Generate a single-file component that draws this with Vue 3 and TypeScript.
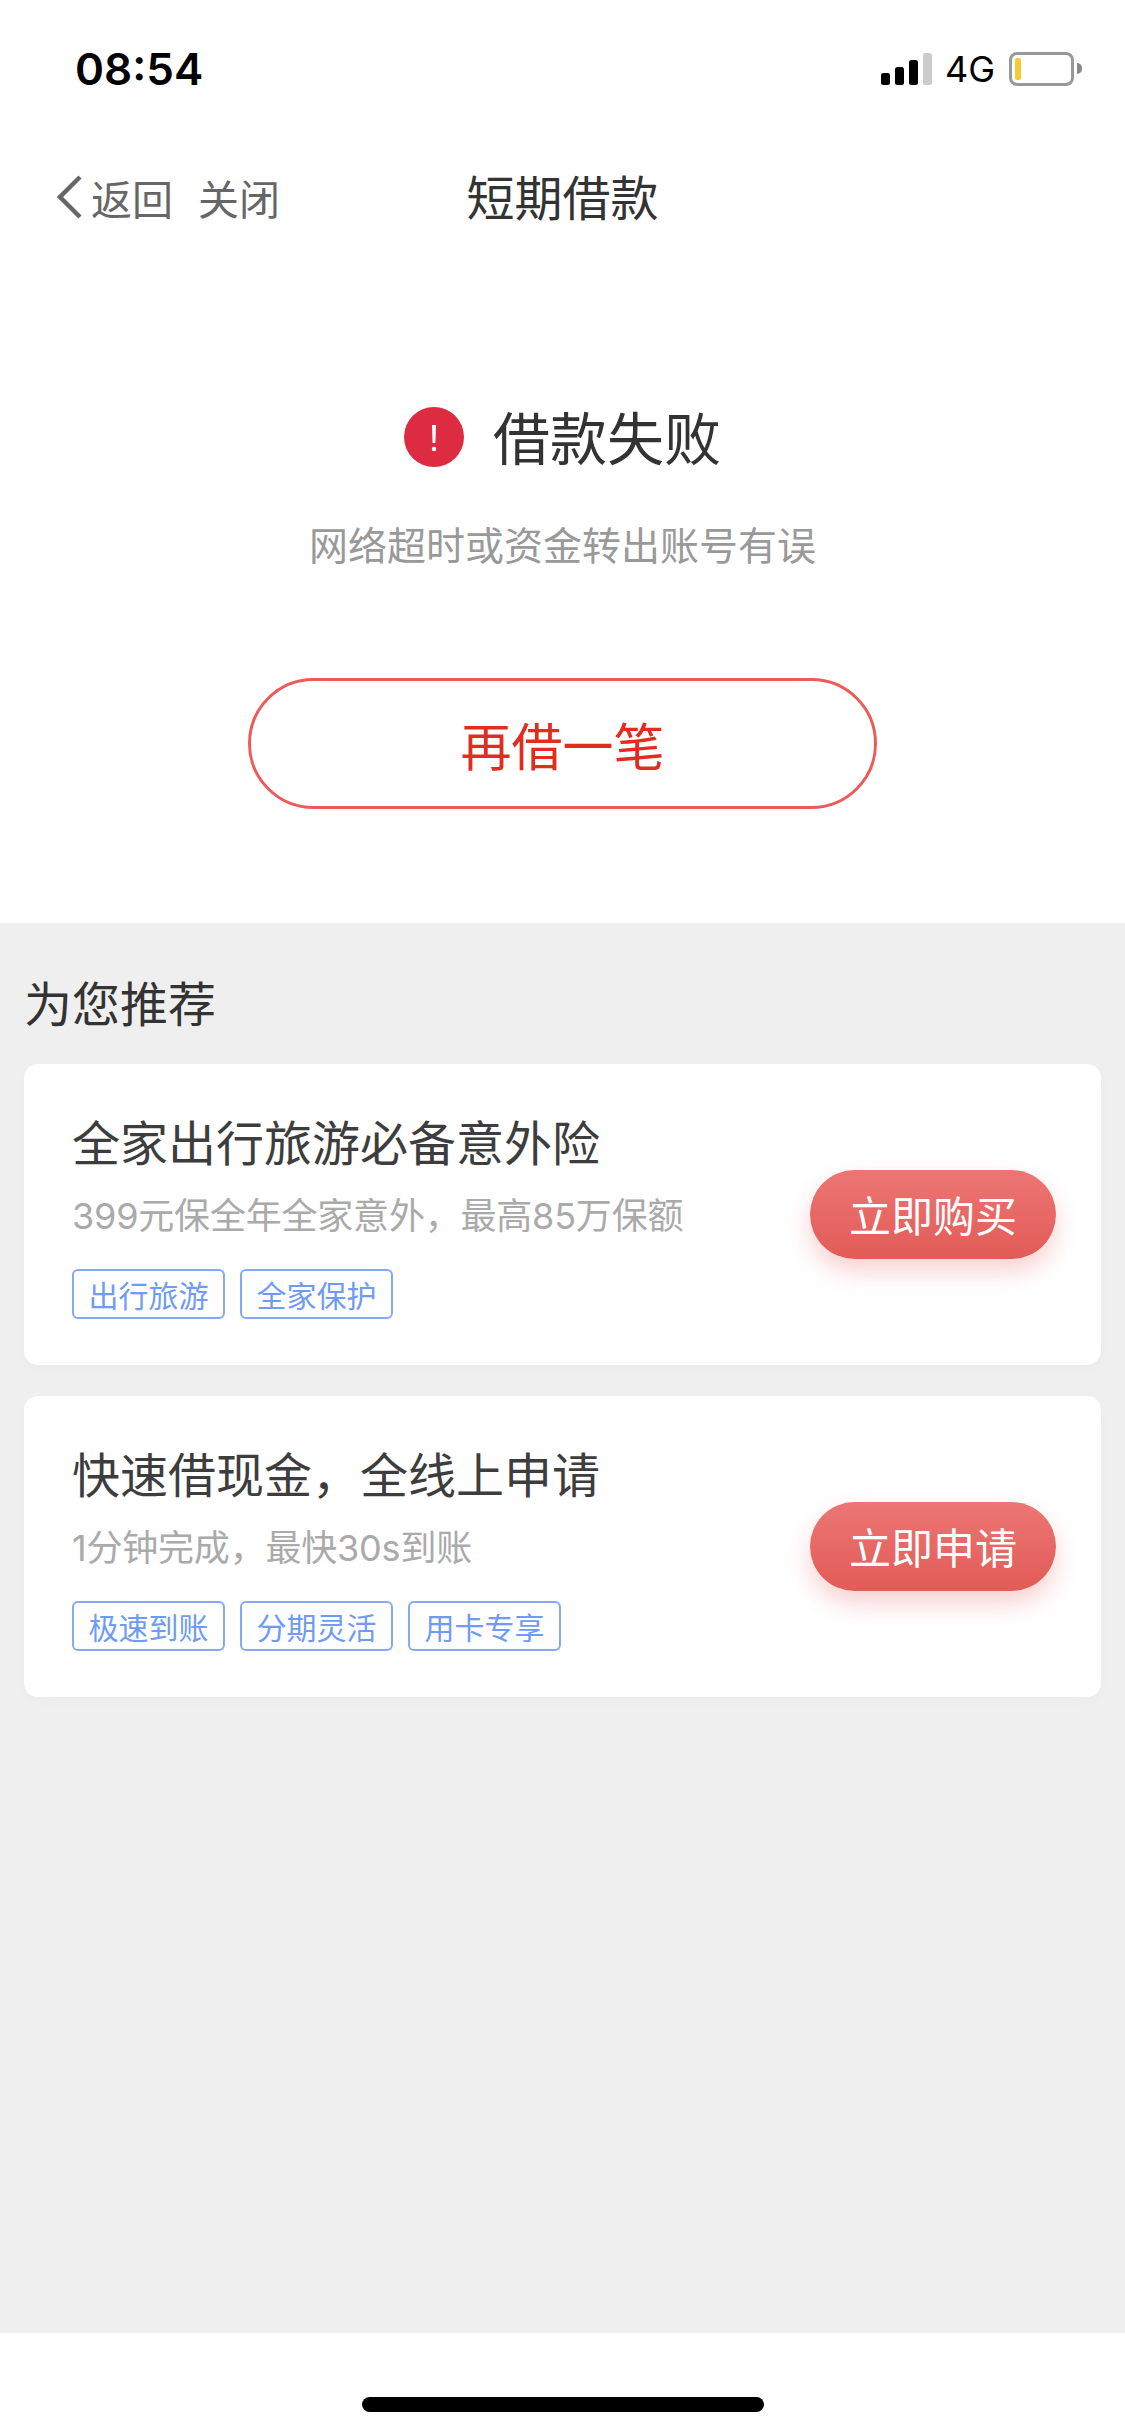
<script setup lang="ts">
interface Offer {
  title: string
  desc: string
  tags: string[]
  action: string
}

const offers: Offer[] = [
  {
    title: '全家出行旅游必备意外险',
    desc: '399元保全年全家意外，最高85万保额',
    tags: ['出行旅游', '全家保护'],
    action: '立即购买',
  },
  {
    title: '快速借现金，全线上申请',
    desc: '1分钟完成，最快30s到账',
    tags: ['极速到账', '分期灵活', '用卡专享'],
    action: '立即申请',
  },
]

const signalBars = [12, 18, 25, 32]
</script>

<template>
  <div class="page">
    <header class="status">
      <span class="time">08:54</span>
      <div class="status-right">
        <div class="signal">
          <i
            v-for="(h, i) in signalBars"
            :key="i"
            class="bar"
            :class="{ off: i === 3 }"
            :style="{ height: h + 'px' }"
          ></i>
        </div>
        <span class="net">4G</span>
        <div class="battery">
          <div class="battery-body"><i class="battery-level"></i></div>
          <i class="battery-cap"></i>
        </div>
      </div>
    </header>

    <nav class="nav">
      <div class="nav-left">
        <svg class="chevron" width="26" height="44" viewBox="0 0 26 44">
          <path d="M24 2 L4 22 L24 42" fill="none" stroke="#666" stroke-width="4.5" />
        </svg>
        <span class="nav-link back">返回</span>
        <span class="nav-link">关闭</span>
      </div>
      <h1 class="nav-title">短期借款</h1>
      <div></div>
    </nav>

    <section class="hero">
      <div class="result">
        <svg width="60" height="60" viewBox="0 0 60 60">
          <circle cx="30" cy="30" r="30" fill="#dd2c41" />
          <path d="M28 18h4l-.6 18h-2.8z" fill="#fff" />
          <circle cx="30" cy="42" r="2.2" fill="#fff" />
        </svg>
        <span class="result-text">借款失败</span>
      </div>
      <p class="reason">网络超时或资金转出账号有误</p>
      <button class="retry">再借一笔</button>
    </section>

    <section class="recommend">
      <h2 class="recommend-title">为您推荐</h2>
      <div class="cards">
        <article v-for="offer in offers" :key="offer.title" class="card">
          <div class="card-body">
            <div class="card-title">{{ offer.title }}</div>
            <div class="card-desc">{{ offer.desc }}</div>
            <div class="tags">
              <span v-for="tag in offer.tags" :key="tag" class="tag">{{ tag }}</span>
            </div>
          </div>
          <button class="cta">{{ offer.action }}</button>
        </article>
      </div>
    </section>

    <footer class="home">
      <i class="home-bar"></i>
    </footer>
  </div>
</template>

<style>
html,
body {
  margin: 0;
  background: #fff;
}
</style>

<style scoped>
.page {
  width: 1125px;
  height: 2436px;
  display: flex;
  flex-direction: column;
  background: #fff;
  font-family: "Noto Sans CJK SC", "Noto Sans", sans-serif;
  overflow: hidden;
}

/* status bar */
.status {
  height: 137px;
  padding: 0 43px 0 75px;
  display: flex;
  align-items: center;
  justify-content: space-between;
  box-sizing: border-box;
  flex: none;
}
.time {
  font-family: Inter, sans-serif;
  font-weight: 600;
  font-size: 44px;
  line-height: 50px;
  color: #000;
}
.status-right {
  display: flex;
  align-items: center;
}
.signal {
  display: flex;
  align-items: flex-end;
  gap: 5px;
  height: 32px;
}
.bar {
  width: 9px;
  border-radius: 2.5px;
  background: #000;
}
.bar.off {
  background: #ccc;
}
.net {
  margin-left: 13px;
  font-family: Inter, sans-serif;
  font-size: 36px;
  line-height: 40px;
  color: #000;
}
.battery {
  margin-left: 14px;
  display: flex;
  align-items: center;
  gap: 3px;
}
.battery-body {
  width: 65px;
  height: 34px;
  box-sizing: border-box;
  border: 3px solid #999;
  border-radius: 8px;
  padding: 3px;
}
.battery-level {
  display: block;
  width: 6px;
  height: 22px;
  border-radius: 2px;
  background: #f7c933;
}
.battery-cap {
  width: 5px;
  height: 11px;
  background: #888;
  border-radius: 0 5px 5px 0;
}

/* nav */
.nav {
  height: 120px;
  padding-left: 56px;
  display: grid;
  grid-template-columns: 1fr auto 1fr;
  align-items: center;
  flex: none;
}
.nav-left {
  display: flex;
  align-items: center;
}
.nav-link {
  font-size: 41px;
  line-height: 56px;
  color: #666;
}
.back {
  margin: 0 25px 0 9px;
}
.nav-title {
  margin: -5px 56px 0 0;
  font-weight: 400;
  font-size: 48px;
  line-height: 60px;
  color: #333;
}

/* result */
.hero {
  height: 666px;
  padding-top: 150px;
  box-sizing: border-box;
  display: flex;
  flex-direction: column;
  align-items: center;
  flex: none;
}
.result {
  display: flex;
  align-items: center;
  gap: 29px;
  height: 60px;
}
.result-text {
  margin-top: -5px;
  font-size: 57px;
  line-height: 60px;
  color: #333;
}
.reason {
  margin: 51px 0 0;
  font-size: 39px;
  line-height: 50px;
  color: #999;
}
.retry {
  margin-top: 110px;
  width: 629px;
  height: 131px;
  box-sizing: border-box;
  border: 3px solid #ec5a5a;
  border-radius: 66px;
  background: #fff;
  font-family: inherit;
  font-size: 51px;
  color: #e22c20;
  padding: 0;
}

/* recommendations */
.recommend {
  flex: 1;
  background: #efefef;
  padding: 46px 24px 0;
}
.recommend-title {
  margin: 0 0 31px;
  font-weight: 400;
  font-size: 48px;
  line-height: 64px;
  color: #333;
}
.cards {
  display: flex;
  flex-direction: column;
  gap: 31px;
}
.card {
  height: 301px;
  padding: 0 45px 0 48px;
  box-sizing: border-box;
  display: flex;
  align-items: center;
  justify-content: space-between;
  background: #fff;
  border-radius: 14px;
  box-shadow: 0 4px 12px rgba(0, 0, 0, 0.02);
}
.card-title {
  font-size: 48px;
  line-height: 60px;
  color: #3d3d3d;
}
.card-desc {
  margin-top: 21px;
  font-family: Inter, "Noto Sans CJK SC", sans-serif;
  font-size: 36px;
  letter-spacing: -0.2px;
  line-height: 50px;
  color: #aaa;
}
.tags {
  margin-top: 28px;
  display: flex;
  gap: 15px;
}
.tag {
  width: 153px;
  height: 50px;
  box-sizing: border-box;
  border: 2px solid #85a9f6;
  border-radius: 6px;
  display: flex;
  align-items: center;
  justify-content: center;
  font-size: 30px;
  line-height: 46px;
  color: #6f9bf5;
}
.cta {
  width: 246px;
  height: 89px;
  border: 0;
  padding: 0 0 2px;
  border-radius: 45px;
  background: linear-gradient(180deg, #ec7674, #e25b57);
  box-shadow: 0 12px 24px rgba(226, 91, 87, 0.28);
  font-family: inherit;
  font-size: 42px;
  color: #fff;
}

/* home indicator */
.home {
  height: 103px;
  flex: none;
  padding-top: 64px;
  box-sizing: border-box;
  display: flex;
  justify-content: center;
  background: #fff;
}
.home-bar {
  width: 402px;
  height: 15px;
  border-radius: 8px;
  background: #000;
}
</style>
